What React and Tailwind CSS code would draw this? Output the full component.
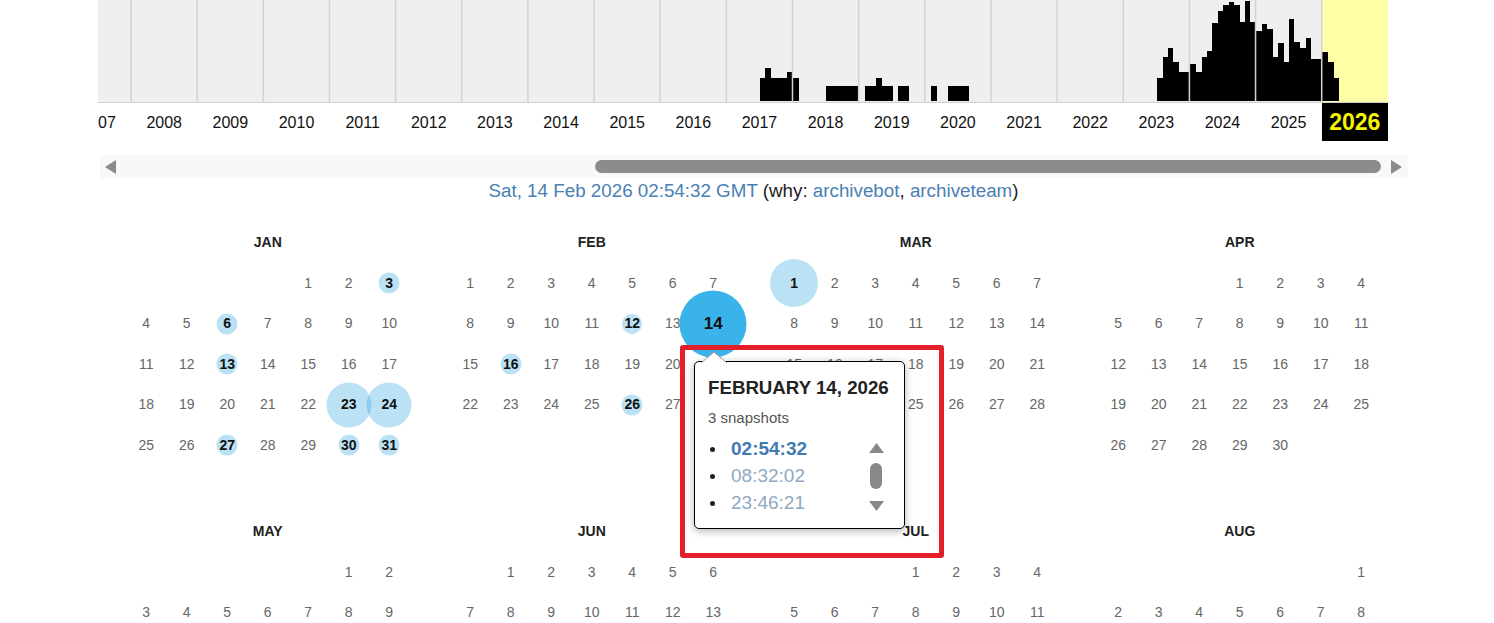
import React from 'react';

// ── Data ──────────────────────────────────────────────────────────────────────

const YEARS = [
  2007, 2008, 2009, 2010, 2011, 2012, 2013, 2014, 2015, 2016,
  2017, 2018, 2019, 2020, 2021, 2022, 2023, 2024, 2025, 2026,
];

// [x0, x1, top] in chart coords, baseline at 101
const BARS = [
  [662, 667, 78], [667, 673, 68], [673, 689, 78], [689, 694, 72], [695, 701, 78],
  [728, 761, 86],
  [767, 778, 86], [778, 784, 78], [784, 795, 86], [800, 811, 86],
  [833, 839, 86], [850, 871, 86],
  [1059, 1065, 78], [1065, 1070, 57], [1070, 1075, 48], [1075, 1081, 62], [1081, 1091, 72],
  [1091, 1098, 64], [1098, 1104, 72], [1104, 1109, 57], [1109, 1114, 51], [1114, 1120, 23],
  [1120, 1125, 11], [1125, 1131, 5], [1131, 1136, 2], [1136, 1142, 5], [1142, 1147, 22],
  [1147, 1152, 1], [1152, 1158, 22],
  [1158, 1164, 31], [1164, 1169, 24], [1169, 1175, 29], [1175, 1180, 57], [1180, 1186, 43],
  [1186, 1191, 62], [1191, 1196, 19], [1196, 1202, 42], [1202, 1208, 48], [1208, 1213, 38],
  [1213, 1224, 59],
  [1224, 1230, 52], [1230, 1236, 62], [1236, 1241, 78],
];

const MONTHS = [
  { name: 'JAN', start: 4, days: 31 },
  { name: 'FEB', start: 0, days: 28 },
  { name: 'MAR', start: 0, days: 31 },
  { name: 'APR', start: 3, days: 30 },
  { name: 'MAY', start: 5, days: 31 },
  { name: 'JUN', start: 1, days: 30 },
  { name: 'JUL', start: 3, days: 31 },
  { name: 'AUG', start: 6, days: 31 },
];

// snapshot circles: size in px
const HITS = {
  'JAN-3': 21, 'JAN-6': 21, 'JAN-13': 21, 'JAN-23': 45, 'JAN-24': 45,
  'JAN-27': 21, 'JAN-30': 21, 'JAN-31': 21,
  'FEB-12': 20, 'FEB-16': 21, 'FEB-26': 21,
  'MAR-1': 48,
};

// ── Pieces ────────────────────────────────────────────────────────────────────

function Sparkline() {
  const lines = [];
  for (let k = 0; k < 19; k++) lines.push(33 + 66.15 * k);
  return (
    <div className="relative h-[103px] bg-[#efefef] border-b border-[#cfcfcf]">
      <svg className="absolute inset-0" width="1290" height="103" viewBox="0 0 1290 103">
        <rect x="1224" y="0" width="66" height="102" fill="#ffffa8" />
        {BARS.map(([x0, x1, top], i) => (
          <rect key={i} x={x0} y={top} width={x1 - x0} height={101 - top} fill="#000" />
        ))}
        {lines.map((x, i) => (
          <rect key={i} x={x - 0.75} y="0" width="1.5" height="102" fill="#d3d3d3" />
        ))}
      </svg>
    </div>
  );
}

function YearLabels() {
  return (
    <div className="w-[1290px] overflow-hidden">
      <div className="grid grid-cols-[repeat(20,66.15px)] -ml-[33px] h-[38px]">
        {YEARS.map(y =>
          y === 2026 ? (
            <div key={y} className="bg-black text-[#f5f500] font-bold text-[23px] flex items-center justify-center">
              {y}
            </div>
          ) : (
            <div key={y} className="pt-[1px] text-[16px] text-[#111] flex items-center justify-center">
              {y}
            </div>
          )
        )}
      </div>
    </div>
  );
}

function Scroller() {
  return (
    <div className="ml-[100px] w-[1308px] h-[23px] bg-[#f8f8f8] flex items-center">
      <svg className="ml-[5px]" width="12" height="14" viewBox="0 0 12 14">
        <path d="M11 0 L11 14 L0 7 Z" fill="#8a8a8a" />
      </svg>
      <div className="ml-[478px] w-[786px] h-[13px] rounded-full bg-[#8c8c8c]" />
      <svg className="ml-[10px]" width="11" height="14" viewBox="0 0 11 14">
        <path d="M0 0 L0 14 L11 7 Z" fill="#8a8a8a" />
      </svg>
    </div>
  );
}

function Month({ m }) {
  const cells = [];
  for (let i = 0; i < m.start; i++) cells.push(null);
  for (let d = 1; d <= m.days; d++) cells.push(d);
  while (cells.length < 42) cells.push(null);

  return (
    <div className="w-[283.5px]">
      <div className="h-[20px] leading-[20px] text-center text-[14px] font-bold text-[#222]">{m.name}</div>
      <div className="mt-[11px] grid grid-cols-[repeat(7,40.5px)] auto-rows-[40.5px]">
        {cells.map((d, i) => {
          if (!d) return <div key={i} />;
          const key = `${m.name}-${d}`;
          const selected = key === 'FEB-14';
          const size = HITS[key];
          return (
            <div key={i} className="relative flex items-center justify-center">
              {selected && (
                <span className="absolute left-1/2 top-1/2 -translate-x-1/2 -translate-y-1/2 w-[67px] h-[67px] rounded-full bg-[#3ab3ea]" />
              )}
              {size && (
                <span
                  className="absolute left-1/2 top-1/2 -translate-x-1/2 -translate-y-1/2 rounded-full bg-[#39a9e0]/35"
                  style={{ width: size, height: size }}
                />
              )}
              <span
                className={`relative ${
                  selected ? 'text-[17px] font-bold text-[#111]' : size ? 'text-[14px] font-bold text-[#111]' : 'text-[14px] text-[#666]'
                }`}
              >
                {d}
              </span>
            </div>
          );
        })}
      </div>
    </div>
  );
}

function Popup() {
  const times = [
    { t: '02:54:32', cls: 'font-bold text-[#3f7bb0]' },
    { t: '08:32:02', cls: 'text-[#8fa9c1]' },
    { t: '23:46:21', cls: 'text-[#8fa9c1]' },
  ];
  return (
    <div className="absolute left-[694px] top-[361px] w-[211px] h-[168px] bg-white border border-black rounded-[5px] shadow-[0_2px_8px_rgba(0,0,0,0.3)] z-10">
      <svg className="absolute left-[5px] -top-[11px]" width="28" height="12" viewBox="0 0 28 12">
        <path d="M1 12 L14 1 L27 12" fill="#fff" stroke="#999" strokeWidth="1" />
        <rect x="2" y="11" width="24" height="2" fill="#fff" />
      </svg>
      <div className="pt-[14px] px-[13px]">
        <div className="text-[18.7px] leading-[24px] font-bold text-[#222] whitespace-nowrap">FEBRUARY 14, 2026</div>
        <div className="mt-[8px] text-[15px] leading-[20px] text-[#555]">3 snapshots</div>
        <div className="mt-[8px] flex">
          <div className="flex-1">
            {times.map(({ t, cls }) => (
              <div key={t} className="h-[27px] flex items-center">
                <span className="ml-[2px] w-[5px] h-[5px] rounded-full bg-[#222]" />
                <span className={`ml-[16px] text-[19px] ${cls}`}>{t}</span>
              </div>
            ))}
          </div>
          <div className="w-[16px] mr-[7px] flex flex-col items-center">
            <svg className="mt-[7px]" width="15" height="10" viewBox="0 0 15 10">
              <path d="M0 10 L7.5 0 L15 10 Z" fill="#888" />
            </svg>
            <div className="mt-[10px] w-[12px] h-[26px] rounded-full bg-[#888]" />
            <svg className="mt-[12px]" width="15" height="10" viewBox="0 0 15 10">
              <path d="M0 0 L15 0 L7.5 10 Z" fill="#888" />
            </svg>
          </div>
        </div>
      </div>
    </div>
  );
}

// ── Main component ────────────────────────────────────────────────────────────

export default function App() {
  return (
    <div className="relative w-[1494px] h-[623px] overflow-hidden bg-white font-['Liberation_Sans',Arial,sans-serif]">
      <div className="ml-[98px] w-[1290px]">
        <Sparkline />
        <YearLabels />
      </div>

      <div className="mt-[14px]">
        <Scroller />
      </div>

      <div className="mt-[2px] pl-[13px] text-center text-[18.8px] leading-[22px] text-[#222]">
        <span className="text-[#4a80b4]">Sat, 14 Feb 2026 02:54:32 GMT</span>
        {' (why: '}
        <span className="text-[#4a80b4]">archivebot</span>
        {', '}
        <span className="text-[#4a80b4]">archiveteam</span>
        {')'}
      </div>

      <div className="ml-[126px] mt-[30px] grid grid-cols-[repeat(4,283.5px)] gap-x-[40.5px] gap-y-[15px]">
        {MONTHS.map(m => (
          <Month key={m.name} m={m} />
        ))}
      </div>

      <Popup />

      {/* highlight frame */}
      <div className="absolute left-[680px] top-[345px] w-[264px] h-[213px] border-[5px] border-[#e3202a] rounded-[3px] z-20" />
    </div>
  );
}
